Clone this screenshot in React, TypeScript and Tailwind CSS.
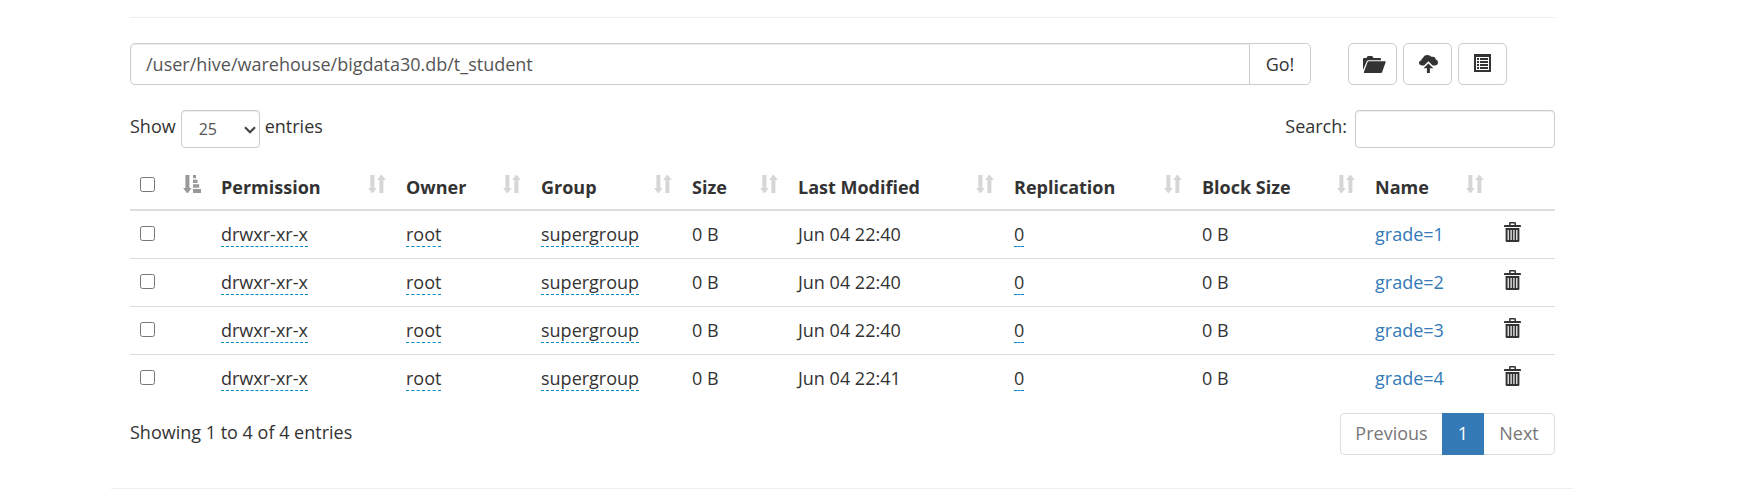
import { useState } from 'react';
import type { ReactNode } from 'react';

const files = [
  { name: 'grade=1', modified: 'Jun 04 22:40' },
  { name: 'grade=2', modified: 'Jun 04 22:40' },
  { name: 'grade=3', modified: 'Jun 04 22:40' },
  { name: 'grade=4', modified: 'Jun 04 22:41' },
];

const columns = [
  { label: 'Permission', width: 'w-[185px]' },
  { label: 'Owner', width: 'w-[135px]' },
  { label: 'Group', width: 'w-[151px]' },
  { label: 'Size', width: 'w-[106px]' },
  { label: 'Last Modified', width: 'w-[216px]' },
  { label: 'Replication', width: 'w-[188px]' },
  { label: 'Block Size', width: 'w-[173px]' },
  { label: 'Name', width: 'w-[129px]' },
];

function FolderOpenIcon() {
  return (
    <svg width="27" height="17" viewBox="-4 0 27 17" fill="currentColor" aria-hidden="true">
      <path d="M0 14V3Q0 2 1 2H3.5Q4 0 5.5 0H8.5Q10 0 10.5 2H17Q18 2 18 3V4.2H5.6Q4.3 4.2 3.8 5.3Z" />
      <path d="M5.8 5.2H22.2Q23 5.2 22.7 6L19.2 16Q18.8 17 18 17H1.2Q.6 17 .9 16L4.6 6Q4.9 5.2 5.8 5.2Z" />
    </svg>
  );
}

function CloudUploadIcon() {
  return (
    <svg width="21" height="18" viewBox="-2 0 21 18" fill="currentColor" aria-hidden="true">
      <path d="M3.6 10.4Q0 10.4 0 7.8Q0 5.6 2.5 5.2Q2.2 3.4 4 3.1Q5 0 8.2 0Q11 0 12.4 1.8Q16.4 1 16.8 4.6Q19 5.4 19 7.4Q19 10.2 15.4 10.4H13.6L9.4 6.2L5.2 10.4Z" />
      <path d="M9.4 8.4L14.3 13.3H10.9V18H7.9V13.3H4.5Z" />
    </svg>
  );
}

function ListAltIcon() {
  return (
    <svg width="17" height="20" viewBox="0 0 17 20" fill="currentColor" aria-hidden="true">
      <path fillRule="evenodd" d="M0 0H17V18H0ZM2 3V16H15V3Z" />
      <path d="M3 4H5V6H3ZM6 4H14V6H6ZM3 7H5V9H3ZM6 7H14V9H6ZM3 10H5V12H3ZM6 10H14V12H6ZM3 13H5V15H3ZM6 13H14V15H6Z" />
    </svg>
  );
}

function TrashIcon() {
  return (
    <svg width="17" height="20" viewBox="0 0 17 20" fill="currentColor" aria-hidden="true">
      <path fillRule="evenodd" d="M5 3V1.4Q5 0 6.4 0H10.6Q12 0 12 1.4V3H16Q17 3 17 4V5H0V4Q0 3 1 3ZM6.5 3H10.5V1.6H6.5Z" />
      <path fillRule="evenodd" d="M1.6 6H15.4V18.8Q15.4 20 14.2 20H2.8Q1.6 20 1.6 18.8ZM3.6 8V18H4.8V8ZM6.5 8V18H7.7V8ZM9.3 8V18H10.5V8ZM12.2 8V18H13.4V8Z" />
    </svg>
  );
}

function SortIcon() {
  return (
    <svg className="text-[#d6d6d6]" width="18" height="18" viewBox="0 0 18 18" fill="currentColor" aria-hidden="true">
      <path d="M2.4 0H6.4V13H8.7L4.9 18H3.9L.1 13H2.4Z" />
      <path d="M11.4 18H15.4V5H17.7L13.9 0H12.9L9.1 5H11.4Z" />
    </svg>
  );
}

function SortAscIcon() {
  return (
    <svg className="text-[#999]" width="18" height="18" viewBox="0 0 18 18" fill="currentColor" aria-hidden="true">
      <path d="M2.4 0H6.4V13H8.7L4.9 18H3.9L.1 13H2.4Z" />
      <path d="M10 0H13V3.2H10ZM10 4.7H14.5V8H10ZM10 9.3H16.2V12.7H10ZM10 14H18V18H10Z" />
    </svg>
  );
}

function ToolButton({ label, children }: { label: string; children: ReactNode }) {
  return (
    <button
      type="button"
      aria-label={label}
      className="flex h-[42px] w-[49px] items-center justify-center rounded-[5px] border border-[#ccc] bg-white"
    >
      {children}
    </button>
  );
}

function Editable({ children }: { children: ReactNode }) {
  return <span className="border-b border-dashed border-[#0088cc]">{children}</span>;
}

function RowCheckbox({ label }: { label: string }) {
  return <input type="checkbox" aria-label={label} className="block size-[15px]" />;
}

export default function App() {
  const [path, setPath] = useState('/user/hive/warehouse/bigdata30.db/t_student');

  return (
    <div className="bg-white pr-[65px] font-['Open_Sans','Noto_Sans',sans-serif] text-[18px] leading-6 text-[#333]">
      <div className="mx-auto max-w-[1462px]">
        <div className="pt-[17px] pr-[18px] pl-[19px]">
          <hr className="border-[#eee]" />

          <div className="mt-[25px] flex items-center">
            <form className="flex flex-1" onSubmit={(e) => e.preventDefault()}>
              <input
                type="text"
                aria-label="Directory"
                value={path}
                onChange={(e) => setPath(e.target.value)}
                className="h-[42px] min-w-0 flex-1 rounded-l-[5px] border border-[#ccc] px-[15px] text-[#555] shadow-[inset_0_1px_1px_rgba(0,0,0,0.075)]"
              />
              <button type="submit" className="-ml-px h-[42px] w-[62px] rounded-r-[5px] border border-[#ccc] bg-white">
                Go!
              </button>
            </form>
            <div className="mr-12 ml-[37px] flex gap-[6px]">
              <ToolButton label="Create directory">
                <FolderOpenIcon />
              </ToolButton>
              <ToolButton label="Upload files">
                <CloudUploadIcon />
              </ToolButton>
              <ToolButton label="Cut and paste">
                <ListAltIcon />
              </ToolButton>
            </div>
          </div>

          <div className="mt-[25px] flex items-start justify-between">
            <label className="flex items-start gap-[5px]">
              <span className="pt-1">Show</span>
              <span className="relative">
                <select
                  defaultValue="25"
                  className="block h-[38px] w-[79px] appearance-none rounded-[4px] border border-[#ccc] bg-white px-[17px] text-[16px] text-[#555] shadow-[inset_0_1px_1px_rgba(0,0,0,0.075)]"
                >
                  <option>10</option>
                  <option>25</option>
                  <option>50</option>
                  <option>100</option>
                </select>
                <svg
                  className="pointer-events-none absolute top-4 right-1 text-[#444]"
                  width="12"
                  height="8"
                  viewBox="0 0 12 8"
                  fill="none"
                  stroke="currentColor"
                  strokeWidth="2.2"
                  aria-hidden="true"
                >
                  <path d="M1 1.2L6 6.2L11 1.2" />
                </svg>
              </span>
              <span className="pt-1">entries</span>
            </label>
            <label className="flex items-start gap-2">
              <span className="pt-1">Search:</span>
              <input
                type="search"
                className="h-[38px] w-[200px] rounded-[4px] border border-[#ccc] px-3 text-[16px] shadow-[inset_0_1px_1px_rgba(0,0,0,0.075)]"
              />
            </label>
          </div>

          <table className="mt-[14px] w-full table-fixed border-separate border-spacing-0 text-left">
            <thead>
              <tr className="[&>th]:h-[49px] [&>th]:border-b-2 [&>th]:border-[#ddd] [&>th]:p-0">
                <th className="w-[35px]">
                  <div className="pb-[2px] pl-[10px]">
                    <RowCheckbox label="Select all" />
                  </div>
                </th>
                <th className="w-[46px]" aria-label="Type">
                  <div className="flex justify-end pr-[10px] pb-1">
                    <SortAscIcon />
                  </div>
                </th>
                {columns.map((col) => (
                  <th key={col.label} className={col.width}>
                    <div className="flex items-center justify-between px-[10px]">
                      <span className="pt-[2px] font-bold whitespace-nowrap">{col.label}</span>
                      <span className="pb-1">
                        <SortIcon />
                      </span>
                    </div>
                  </th>
                ))}
                <th className="w-[61px]" aria-label="Actions" />
              </tr>
            </thead>
            <tbody>
              {files.map((file) => (
                <tr
                  key={file.name}
                  className="[&>td]:h-12 [&>td]:border-b [&>td]:border-[#ddd] [&>td]:px-[10px] [&>td]:pt-0 [&>td]:pb-[2px] last:[&>td]:border-transparent"
                >
                  <td>
                    <RowCheckbox label={`Select ${file.name}`} />
                  </td>
                  <td />
                  <td>
                    <Editable>drwxr-xr-x</Editable>
                  </td>
                  <td>
                    <Editable>root</Editable>
                  </td>
                  <td>
                    <Editable>supergroup</Editable>
                  </td>
                  <td>0 B</td>
                  <td>{file.modified}</td>
                  <td>
                    <Editable>0</Editable>
                  </td>
                  <td>0 B</td>
                  <td>
                    <a href="#" className="text-[#337ab7]">
                      {file.name}
                    </a>
                  </td>
                  <td>
                    <button type="button" aria-label={`Delete ${file.name}`} className="block pb-1">
                      <TrashIcon />
                    </button>
                  </td>
                </tr>
              ))}
            </tbody>
          </table>

          <div className="mt-[10px] flex items-start justify-between">
            <p className="pt-[7px]">Showing 1 to 4 of 4 entries</p>
            <nav aria-label="Pages" className="flex h-[42px] text-[#777]">
              <a href="#" className="flex w-[102px] items-center justify-center rounded-l-[5px] border border-r-0 border-[#ddd] pb-[2px]">
                Previous
              </a>
              <a href="#" className="flex w-[42px] items-center justify-center bg-[#337ab7] pb-[2px] text-white">
                1
              </a>
              <a href="#" className="flex w-[71px] items-center justify-center rounded-r-[5px] border border-l-0 border-[#ddd] pb-[2px]">
                Next
              </a>
            </nav>
          </div>
        </div>
        <hr className="mt-[33px] border-[#eee]" />
      </div>
    </div>
  );
}
